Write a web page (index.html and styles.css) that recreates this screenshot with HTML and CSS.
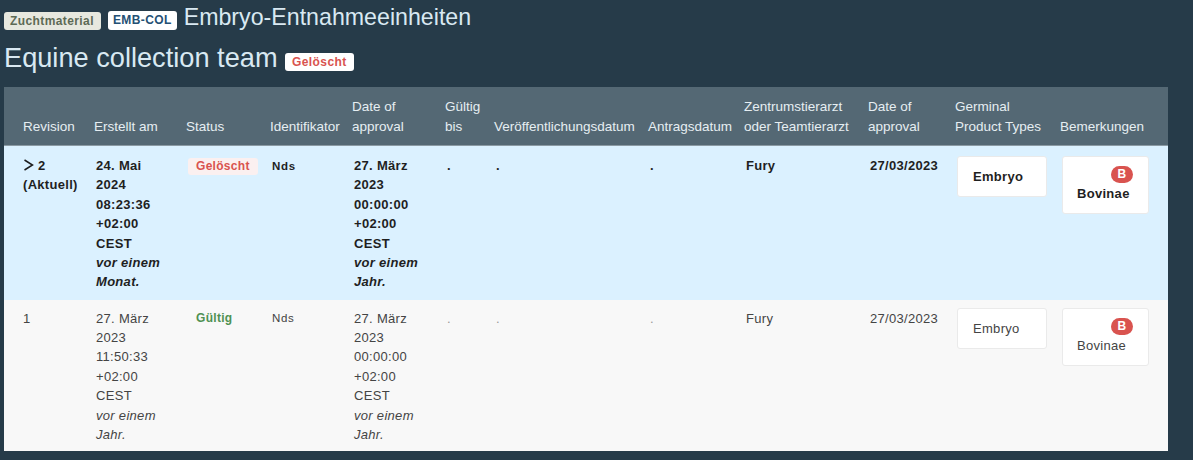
FILE: index.html
```
<!DOCTYPE html>
<html lang="de">
<head>
<meta charset="utf-8">
<title>Embryo-Entnahmeeinheiten</title>
<link rel="stylesheet" href="styles.css">
</head>
<body>
<header class="head">
  <h1 class="title-a"><span class="tag tag-grey">Zuchtmaterial</span><span class="tag tag-white">EMB-COL</span><span class="title-a-text">Embryo-Entnahmeeinheiten</span></h1>
  <h2 class="title-b">Equine collection team<span class="tag tag-red">Gelöscht</span></h2>
</header>
<table class="revs">
  <colgroup>
    <col class="c1"><col class="c2"><col class="c3"><col class="c4"><col class="c5"><col class="c6"><col class="c7"><col class="c8"><col class="c9"><col class="c10"><col class="c11"><col class="c12">
  </colgroup>
  <thead>
    <tr>
      <th>Revision</th><th>Erstellt am</th><th>Status</th><th>Identifikator</th><th>Date of<br>approval</th><th>Gültig<br>bis</th><th>Veröffentlichungsdatum</th><th>Antragsdatum</th><th>Zentrumstierarzt<br>oder Teamtierarzt</th><th>Date of<br>approval</th><th>Germinal<br>Product Types</th><th>Bemerkungen</th>
    </tr>
  </thead>
  <tbody>
    <tr class="current">
      <td class="rev"><svg class="chev" width="11" height="12" viewBox="0 0 11 12" aria-hidden="true"><path d="M1.5 1 L9.5 6 L1.5 11" fill="none" stroke="#1c1c1c" stroke-width="1.5"/></svg>2<br>(Aktuell)</td>
      <td class="date">24. Mai<br>2024<br>08:23:36<br>+02:00<br>CEST<br><em>vor einem<br>Monat.</em></td>
      <td class="status"><span class="pill pill-red">Gelöscht</span></td>
      <td class="ident">Nds</td>
      <td class="date">27. März<br>2023<br>00:00:00<br>+02:00<br>CEST<br><em>vor einem<br>Jahr.</em></td>
      <td class="dot">.</td><td class="dot">.</td><td class="dot">.</td>
      <td>Fury</td>
      <td class="date">27/03/2023</td>
      <td class="box-cell"><div class="box">Embryo</div></td>
      <td class="box-cell"><div class="box box-tall"><span class="count">B</span><span class="box-name">Bovinae</span></div></td>
    </tr>
    <tr class="old">
      <td class="rev">1</td>
      <td class="date">27. März<br>2023<br>11:50:33<br>+02:00<br>CEST<br><em>vor einem<br>Jahr.</em></td>
      <td class="status"><span class="pill pill-green">Gültig</span></td>
      <td class="ident">Nds</td>
      <td class="date">27. März<br>2023<br>00:00:00<br>+02:00<br>CEST<br><em>vor einem<br>Jahr.</em></td>
      <td class="dot">.</td><td class="dot">.</td><td class="dot">.</td>
      <td>Fury</td>
      <td class="date">27/03/2023</td>
      <td class="box-cell"><div class="box">Embryo</div></td>
      <td class="box-cell"><div class="box box-tall"><span class="count">B</span><span class="box-name">Bovinae</span></div></td>
    </tr>
  </tbody>
</table>
</body>
</html>
```
FILE: styles.css
```
html, body { margin: 0; padding: 0; }
body {
  width: 1193px;
  height: 460px;
  overflow: hidden;
  background: #263b49;
  font-family: "Liberation Sans", Arial, sans-serif;
  font-size: 13px;
  color: #333;
}
.head { padding: 0 4px; height: 87px; color: #d9e9f2; }
.title-a { margin: 0; padding-top: 3px; height: 34px; font-weight: 400; font-size: 23.2px; line-height: 28px; display: flex; align-items: center; }
.title-a-text { margin-left: 7px; position: relative; top: -3px; }
.title-b { margin: 0; padding-top: 4px; font-weight: 400; font-size: 27.2px; line-height: 33px; display: flex; align-items: center; }
.tag {
  display: inline-block;
  font-size: 12px;
  font-weight: 700;
  line-height: 18px;
  height: 18px;
  padding: 0 6px;
  border-radius: 3px;
  letter-spacing: .4px;
}
.tag-grey { background: #e7e8df; color: #5d6a55; margin-right: 7px; margin-top: 1px; padding-right: 7px; }
.tag-white { background: #fff; color: #245074; margin-right: 0; height: 19px; padding: 0 5px; }
.tag-red { background: #fff; color: #d9534f; margin-left: 7px; margin-top: 9px; padding: 0 7.5px; }
.revs {
  table-layout: fixed;
  width: 1164px;
  margin-left: 4px;
  border-collapse: separate;
  border-spacing: 0;
}
.c1 { width: 84px; } .c2 { width: 92px; } .c3 { width: 84px; } .c4 { width: 82px; }
.c5 { width: 93px; } .c6 { width: 49px; } .c7 { width: 154px; } .c8 { width: 96px; }
.c9 { width: 124px; } .c10 { width: 87px; } .c11 { width: 105px; } .c12 { width: 114px; }
.revs th {
  background: #546874;
  color: #e6eef2;
  font-weight: 400;
  font-size: 13.5px;
  line-height: 19.5px;
  text-align: left;
  vertical-align: bottom;
  white-space: nowrap;
  height: 59px;
  padding: 0 0 9px 6px;
  box-sizing: border-box;
  border-bottom: 1px solid #8b9aa3;
}
.revs th:first-child { padding-left: 19px; }
.revs td {
  box-sizing: border-box;
  vertical-align: top;
  font-size: 13px;
  line-height: 19.4px;
  padding: 10px 0 0 8px;
  letter-spacing: .3px;
}
.revs td.rev { padding-left: 19px; }
.current { background: #dbf1ff; color: #1f1f1f; font-weight: 700; }
.old { background: #f8f8f8; color: #444; }
.current td { height: 154px; }
.old td { height: 151px; padding-top: 8.6px; }
.chev { margin-right: 4px; vertical-align: -1px; }
.revs td.status { padding-top: 10px; }
.old td.status { padding-top: 8px; }
.status .pill {
  display: inline-block;
  font-size: 12px;
  font-weight: 700;
  line-height: 17px;
  padding: 0 8px;
  border-radius: 3px;
}
.pill-red { background: #fbf0f0; color: #d9534f; }
.pill-green { color: #4f9152; }
.revs td.ident { font-size: 11.5px; letter-spacing: .7px; padding-top: 11px; }
.old td.ident { padding-top: 9px; }
.old .dot { color: #999; }
.revs td.box-cell { padding: 10px 0 0 8px; }
.old td.box-cell { padding-top: 8px; }
.box {
  box-sizing: border-box;
  width: 90px;
  height: 41px;
  padding: 0 15px;
  background: #fff;
  border: 1px solid #eaeaea;
  border-radius: 3px;
  line-height: 40px;
}
.box-tall { position: relative; width: 87px; height: 58px; padding: 0 15px; line-height: 18px; }
.box-name { position: absolute; left: 14px; top: 28px; }
.count {
  position: absolute;
  right: 15px;
  top: 9px;
  width: 22px;
  height: 17px;
  border-radius: 9px;
  background: #d9534f;
  color: #fff;
  font-size: 12px;
  font-weight: 700;
  line-height: 17px;
  text-align: center;
}
```
